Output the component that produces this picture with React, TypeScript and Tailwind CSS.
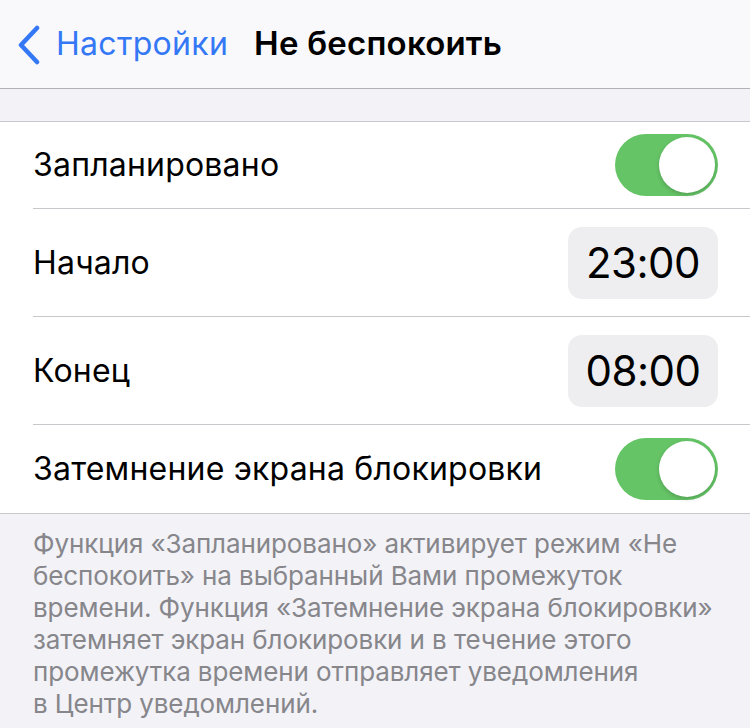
import { ReactNode } from 'react';

const FONT = "font-['Inter','Roboto','Noto_Sans',sans-serif]";

function Toggle() {
  return (
    <div className="flex h-[62px] w-[103px] items-center justify-end rounded-full bg-[#65c466] p-[3px]">
      <div className="h-[56px] w-[56px] rounded-full bg-white shadow-[0_2px_4px_rgba(0,0,0,0.18)]" />
    </div>
  );
}

function TimePill({ value }: { value: string }) {
  return (
    <div className="flex h-[72px] w-[150px] items-center justify-center rounded-[14px] bg-[#eeeef0] text-[42px] leading-none tracking-[-0.5px] text-black">
      {value}
    </div>
  );
}

function Row({
  label,
  height,
  last,
  children,
}: {
  label: string;
  height: string;
  last?: boolean;
  children: ReactNode;
}) {
  return (
    <div className="pl-[33px]">
      <div
        className={`flex items-center justify-between pr-[32px] ${height} ${
          last ? '' : 'border-b border-[#c8c7cc]'
        }`}
      >
        <span className="text-[32px] tracking-[0.2px] text-black">{label}</span>
        {children}
      </div>
    </div>
  );
}

export default function App() {
  return (
    <div className={`h-[728px] w-[750px] overflow-hidden bg-[#f2f2f7] ${FONT}`}>
      {/* nav bar */}
      <div className="flex h-[89px] items-center border-b border-[#b2b2b6] bg-[#f9f9fb]">
        <svg width="24" height="40" viewBox="0 0 24 40" className="ml-[17px] mt-[1px]">
          <path
            d="M20 3 L4 20 L20 37"
            fill="none"
            stroke="#3478f6"
            strokeWidth="4.5"
            strokeLinecap="round"
            strokeLinejoin="round"
          />
        </svg>
        <span className="ml-[15px] text-[32px] tracking-[0.3px] text-[#3478f6]">Настройки</span>
        <span className="ml-[26px] text-[33px] font-semibold tracking-[0.2px] text-black">
          Не беспокоить
        </span>
      </div>

      <div className="h-[32px]" />

      {/* settings group */}
      <div className="border-y border-[#c8c7cc] bg-white">
        <Row label="Запланировано" height="h-[87px]">
          <Toggle />
        </Row>
        <Row label="Начало" height="h-[108px]">
          <TimePill value="23:00" />
        </Row>
        <Row label="Конец" height="h-[108px]">
          <TimePill value="08:00" />
        </Row>
        <Row label="Затемнение экрана блокировки" height="h-[88px]" last>
          <Toggle />
        </Row>
      </div>

      {/* footer note */}
      <p className="whitespace-nowrap pl-[33px] pt-[14px] text-[26px] leading-[32px] tracking-[-0.1px] text-[#86868b]">
        Функция «Запланировано» активирует режим «Не
        <br />
        беспокоить» на выбранный Вами промежуток
        <br />
        времени. Функция «Затемнение экрана блокировки»
        <br />
        затемняет экран блокировки и в течение этого
        <br />
        промежутка времени отправляет уведомления
        <br />в Центр уведомлений.
      </p>
    </div>
  );
}
